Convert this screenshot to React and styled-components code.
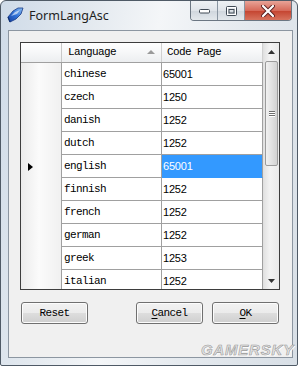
import React from "react";
import styled, { createGlobalStyle } from "styled-components";

const GlobalStyle = createGlobalStyle`
  body {
    margin: 0;
    background: #ffffff;
  }
`;

const rows = [
  { lang: "chinese", code: "65001" },
  { lang: "czech", code: "1250" },
  { lang: "danish", code: "1252" },
  { lang: "dutch", code: "1252" },
  { lang: "english", code: "65001", current: true },
  { lang: "finnish", code: "1252" },
  { lang: "french", code: "1252" },
  { lang: "german", code: "1252" },
  { lang: "greek", code: "1253" },
  { lang: "italian", code: "1252" },
];

const App = () => {
  return (
    <>
      <GlobalStyle />
      <Window>
        <TitleBar>
          <AppIcon width="17" height="16" viewBox="0 0 17 16">
            <defs>
              <linearGradient id="gem" x1="0" y1="1" x2="1" y2="0">
                <stop offset="0" stopColor="#173f9e" />
                <stop offset="0.5" stopColor="#2f72d8" />
                <stop offset="1" stopColor="#8fc0f2" />
              </linearGradient>
            </defs>
            <path d="M1 10 L6 4 L11 1 L16 1 L14 7 L9 12 L3 15 Z" fill="url(#gem)" stroke="#163a85" strokeWidth="0.8" />
            <path d="M4 9 L8 5 L13 3 L10 7 Z" fill="#ffffff" opacity="0.6" />
            <path d="M1 10 L3 15" fill="none" stroke="#0d2f73" strokeWidth="1.2" />
          </AppIcon>
          <Title>FormLangAsc</Title>
          <Caption>
            <CapButton>
              <svg width="11" height="6" viewBox="0 0 11 6">
                <rect x="0.5" y="1.5" width="10" height="3.5" rx="1" fill="#ffffff" stroke="#404a55" />
              </svg>
            </CapButton>
            <CapButton>
              <svg width="11" height="10" viewBox="0 0 11 10">
                <rect x="0.5" y="0.5" width="10" height="9" rx="1" fill="none" stroke="#404a55" />
                <rect x="1.5" y="1.5" width="8" height="7" fill="none" stroke="#ffffff" />
                <rect x="3" y="3.5" width="5" height="3.5" fill="none" stroke="#404a55" />
              </svg>
            </CapButton>
            <CloseButton>
              <svg width="14" height="12" viewBox="0 0 14 12">
                <path d="M2 1 L12 11 M12 1 L2 11" stroke="#5a2020" strokeWidth="4" strokeLinecap="round" />
                <path d="M2 1 L12 11 M12 1 L2 11" stroke="#ffffff" strokeWidth="2.2" strokeLinecap="round" />
              </svg>
            </CloseButton>
          </Caption>
        </TitleBar>

        <Client>
          <Grid>
            <GridMain>
              <HeaderRow>
                <HeadCell />
                <HeadCell>
                  Language
                  <SortArrow />
                </HeadCell>
                <HeadCell>Code Page</HeadCell>
              </HeaderRow>
              <Body>
                {rows.map((r) => (
                  <Row key={r.lang}>
                    <Indicator>{r.current && <Pointer />}</Indicator>
                    <LangCell>{r.lang}</LangCell>
                    <CodeCell $selected={r.current}>{r.code}</CodeCell>
                  </Row>
                ))}
              </Body>
            </GridMain>
            <ScrollBar>
              <ScrollArrow>
                <svg width="7" height="4" viewBox="0 0 7 4">
                  <path d="M0 4 L3.5 0 L7 4 Z" fill="#333" />
                </svg>
              </ScrollArrow>
              <Track>
                <Thumb>
                  <Grip />
                  <Grip />
                  <Grip />
                </Thumb>
              </Track>
              <ScrollArrow>
                <svg width="7" height="4" viewBox="0 0 7 4">
                  <path d="M0 0 L3.5 4 L7 0 Z" fill="#333" />
                </svg>
              </ScrollArrow>
            </ScrollBar>
          </Grid>

          <ButtonRow>
            <Button>Reset</Button>
            <ButtonGroup>
              <Button>
                <u>C</u>ancel
              </Button>
              <Button>
                <u>O</u>K
              </Button>
            </ButtonGroup>
          </ButtonRow>
        </Client>

        <Watermark>GAMERSKY</Watermark>
      </Window>
    </>
  );
};

const Window = styled.div`
  position: relative;
  box-sizing: border-box;
  width: 298px;
  height: 366px;
  border: 1px solid #4f5a66;
  border-radius: 6px 6px 2px 2px;
  background: linear-gradient(100deg, #cfdbe8 0%, #e3e9ef 25%, #f4f6f8 45%, #e4e9ee 70%, #d8dfe6 100%);
  display: flex;
  flex-direction: column;
  overflow: hidden;
`;

const TitleBar = styled.div`
  height: 29px;
  display: flex;
  align-items: flex-start;
  padding-left: 6px;
`;

const AppIcon = styled.svg`
  margin-top: 6px;
  flex-shrink: 0;
`;

const Title = styled.div`
  margin-top: 6px;
  margin-left: 5px;
  font-family: "Noto Sans", "Open Sans", sans-serif;
  font-size: 12.5px;
  line-height: 17px;
  color: #1e1e1e;
`;

const Caption = styled.div`
  margin-left: auto;
  margin-right: 5px;
  display: flex;
  height: 19px;
  border: 1px solid #6b7682;
  border-top: none;
  border-radius: 0 0 4px 4px;
  overflow: hidden;
`;

const CapButton = styled.div`
  width: 26px;
  display: flex;
  align-items: center;
  justify-content: center;
  border-right: 1px solid #8995a1;
  background: linear-gradient(#eef1f4, #dfe4e9 50%, #cfd6dd 51%, #e3e8ec);
`;

const CloseButton = styled.div`
  width: 46px;
  display: flex;
  align-items: center;
  justify-content: center;
  background: linear-gradient(#e8a397, #d66a5a 50%, #c4432f 51%, #d7735e);
`;

const Client = styled.div`
  margin: 0 4px 0 7px;
  height: 328px;
  box-sizing: border-box;
  border: 1px solid #8c96a1;
  background: #f0f0f0;
  padding: 11px 12px 0 11px;
`;

const Grid = styled.div`
  width: 260px;
  height: 248px;
  box-sizing: border-box;
  border: 1px solid #3d3d3d;
  background: #ffffff;
  display: flex;
`;

const GridMain = styled.div`
  width: 242px;
  display: flex;
  flex-direction: column;
  overflow: hidden;
`;

const columns = "41px 100px 101px";

const HeaderRow = styled.div`
  display: grid;
  grid-template-columns: ${columns};
  height: 20px;
  flex-shrink: 0;
  background: linear-gradient(#ffffff, #f6f7f8 50%, #eceef0);
  border-bottom: 1px solid #a0a0a0;
  box-sizing: border-box;
`;

const HeadCell = styled.div`
  position: relative;
  border-right: 1px solid #d0d0d0;
  padding-left: 5px;
  font-family: "Liberation Mono", monospace;
  font-size: 11px;
  letter-spacing: -0.6px;
  line-height: 19px;
  color: #000;
  &:first-child {
    border-right-color: #c8c8c8;
  }
  &:nth-child(2) {
    padding-left: 6px;
  }
`;

const SortArrow = styled.span`
  position: absolute;
  right: 6px;
  top: 7px;
  width: 0;
  height: 0;
  border-left: 4px solid transparent;
  border-right: 4px solid transparent;
  border-bottom: 4px solid #9a9a9a;
`;

const Body = styled.div`
  flex: 1;
  overflow: hidden;
`;

const Row = styled.div`
  display: grid;
  grid-template-columns: ${columns};
  height: 23px;
`;

const Indicator = styled.div`
  display: flex;
  align-items: center;
  padding-left: 7px;
  border-right: 1px solid #a0a0a0;
  background: linear-gradient(90deg, #ebebeb, #fbfbfb 45%, #f0f0f0);
`;

const Pointer = styled.span`
  width: 0;
  height: 0;
  border-top: 4px solid transparent;
  border-bottom: 4px solid transparent;
  border-left: 5px solid #000;
`;

const Cell = styled.div`
  box-sizing: border-box;
  border-right: 1px solid #a0a0a0;
  border-bottom: 1px solid #a0a0a0;
  display: flex;
  align-items: center;
  color: #000;
`;

const LangCell = styled(Cell)`
  padding-left: 2px;
  font-family: "Liberation Mono", monospace;
  font-size: 11px;
  letter-spacing: -0.6px;
`;

const CodeCell = styled(Cell)`
  padding-left: 1px;
  font-family: "Liberation Sans", Arial, sans-serif;
  font-size: 11px;
  letter-spacing: -0.2px;
  background: ${({ $selected }) => ($selected ? "#3399ff" : "#ffffff")};
  color: ${({ $selected }) => ($selected ? "#ffffff" : "#000000")};
  border-bottom-color: ${({ $selected }) => ($selected ? "#3399ff" : "#a0a0a0")};
`;

const ScrollBar = styled.div`
  width: 16px;
  display: flex;
  flex-direction: column;
  background: linear-gradient(90deg, #e3e3e3, #f3f3f3 40%, #eaeaea);
  border-left: 1px solid #e0e0e0;
  box-sizing: border-box;
`;

const ScrollArrow = styled.div`
  height: 17px;
  display: flex;
  align-items: center;
  justify-content: center;
  flex-shrink: 0;
`;

const Track = styled.div`
  flex: 1;
  padding-top: 1px;
`;

const Thumb = styled.div`
  height: 105px;
  margin: 0 1px;
  box-sizing: border-box;
  border: 1px solid #9b9b9b;
  border-radius: 2px;
  background: linear-gradient(90deg, #f1f1f1, #e2e2e2 50%, #d2d2d2);
  display: flex;
  flex-direction: column;
  align-items: center;
  justify-content: center;
  gap: 1px;
`;

const Grip = styled.span`
  width: 6px;
  height: 1px;
  background: #6e6e6e;
  box-shadow: 0 1px 0 #ffffff;
`;

const ButtonRow = styled.div`
  margin-top: 12px;
  width: 260px;
  padding: 0 1px;
  box-sizing: border-box;
  display: flex;
  justify-content: space-between;
`;

const ButtonGroup = styled.div`
  display: flex;
  gap: 9px;
`;

const Button = styled.div`
  width: 67px;
  height: 22px;
  box-sizing: border-box;
  border: 1px solid #707070;
  border-radius: 3px;
  background: linear-gradient(#f2f2f2, #ebebeb 50%, #dddddd 51%, #cfcfcf);
  box-shadow: inset 0 0 0 1px #fcfcfc;
  display: flex;
  align-items: center;
  justify-content: center;
  font-family: "Liberation Mono", monospace;
  font-size: 11px;
  letter-spacing: -0.6px;
  color: #000;
  u {
    text-underline-offset: 2px;
  }
`;

const Watermark = styled.div`
  position: absolute;
  right: 3px;
  bottom: 7px;
  font-family: "Liberation Sans", Arial, sans-serif;
  font-weight: bold;
  font-style: italic;
  font-size: 15px;
  letter-spacing: 0.8px;
  color: #e4e4e4;
  -webkit-text-stroke: 0.6px #9a9a9a;
  text-shadow: 1px 1px 0 #ffffff;
`;

export default App;
